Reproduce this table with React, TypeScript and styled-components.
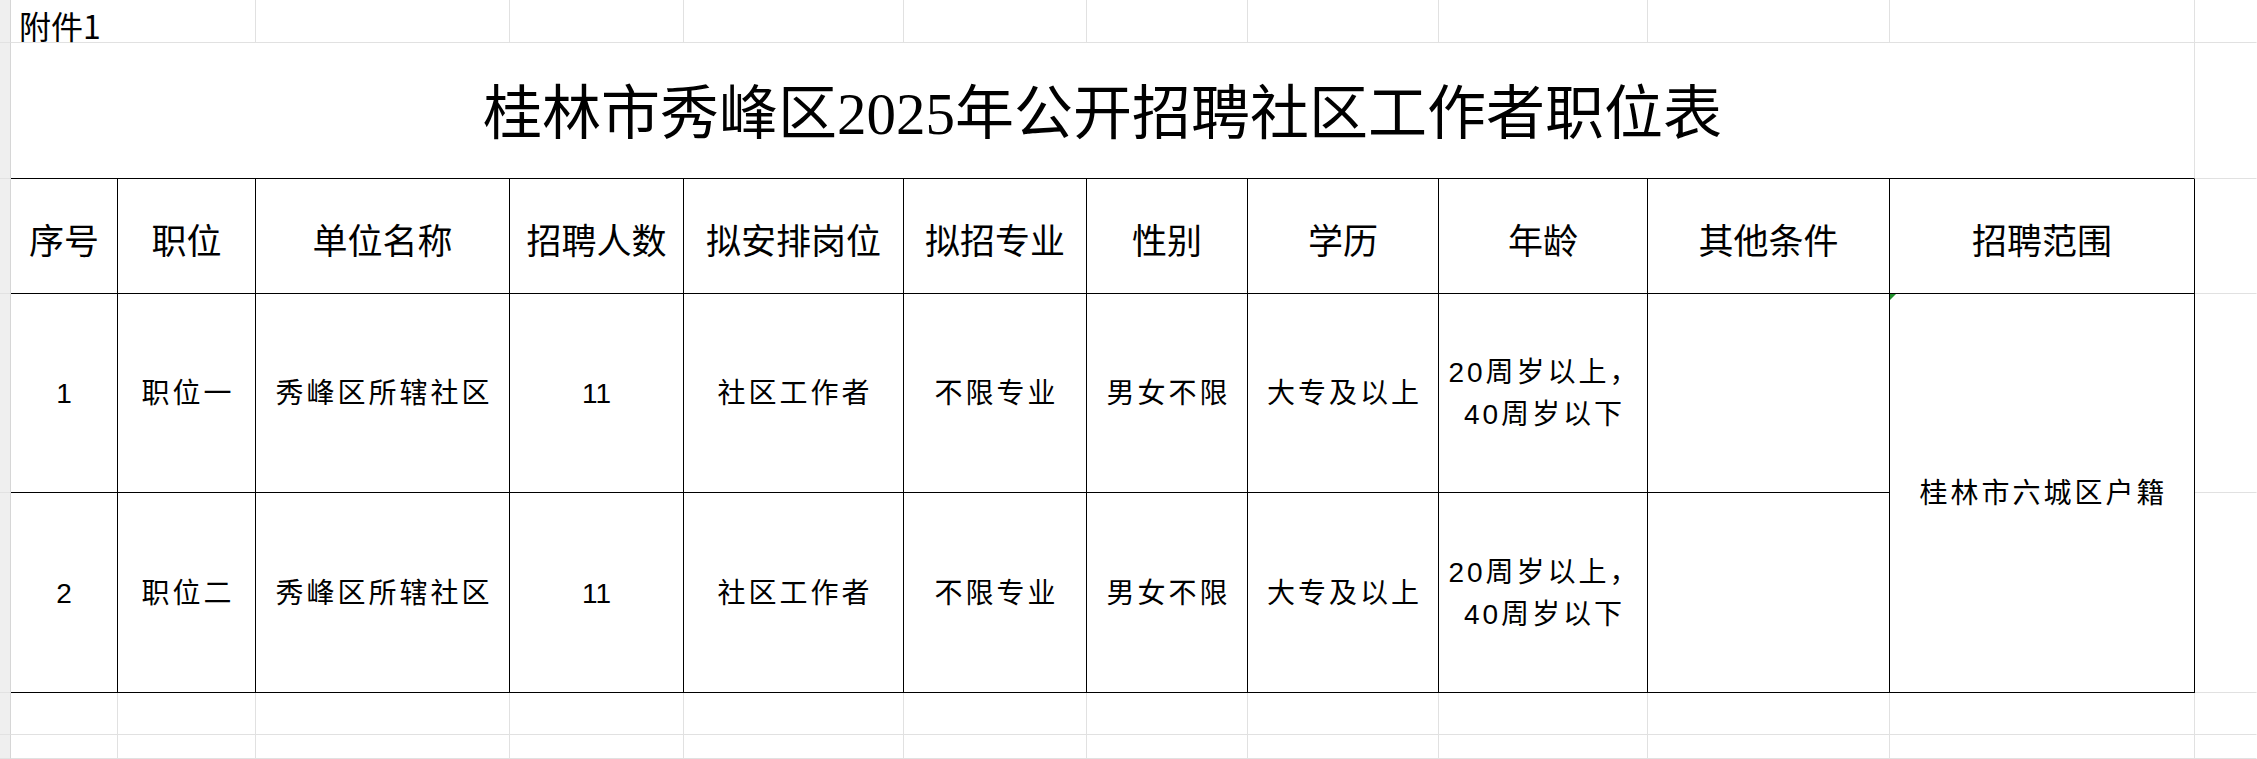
import React from 'react';
import styled, { createGlobalStyle } from 'styled-components';

const GlobalStyle = createGlobalStyle`
  html, body {
    margin: 0;
    padding: 0;
    background: #ffffff;
  }
  body {
    font-family: "Noto Sans CJK SC", "Noto Sans", sans-serif;
    color: #000;
  }
`;

// 表格列宽（含右边框），最左为行号条，最右为表外空列
const COLS = '11px 107px 138px 254px 174px 220px 183px 161px 191px 209px 242px 305px 1fr';
const ROWS = '43px 136px 115px 199px 200px 42px 1fr';

const GRID_LINE = '#e1e1e1';
const INK = '#000000';

type Edge = 'grid' | 'ink' | 'none';

const edgeColor = (e: Edge) => (e === 'ink' ? INK : e === 'grid' ? GRID_LINE : 'transparent');

const Sheet = styled.div`
  display: grid;
  grid-template-columns: ${COLS};
  grid-template-rows: ${ROWS};
  width: 100vw;
  height: 759px;
  overflow: hidden;
`;

const RowHead = styled.div`
  background: #efefef;
  border-right: 1px solid #d6d6d6;
  border-bottom: 1px solid #e2e2e2;
`;

const Cell = styled.div<{ $right?: Edge; $bottom?: Edge; $span?: number; $rows?: number }>`
  box-sizing: border-box;
  position: relative;
  display: flex;
  align-items: center;
  justify-content: center;
  text-align: center;
  min-width: 0;
  border-right: 1px solid ${({ $right = 'grid' }) => edgeColor($right)};
  border-bottom: 1px solid ${({ $bottom = 'grid' }) => edgeColor($bottom)};
  grid-column: span ${({ $span = 1 }) => $span};
  grid-row: span ${({ $rows = 1 }) => $rows};
`;

const NoteCell = styled(Cell)`
  align-items: flex-end;
  justify-content: flex-start;
  padding: 0 0 1px 8px;
`;

// 合并单元格左上角的绿色小三角（错误提示标记）
const FlagCell = styled(Cell)`
  &::before {
    content: '';
    position: absolute;
    left: 0;
    top: 0;
    border-top: 6px solid #1f8f2a;
    border-right: 6px solid transparent;
  }
`;

const NoteText = styled.span`
  font-family: "Noto Sans CJK SC", sans-serif;
  font-size: 32px;
  line-height: 1;
`;

const TitleText = styled.span`
  font-family: "Liberation Serif", "Noto Sans CJK SC", serif;
  font-size: 59px;
  line-height: 1;
  padding-top: 8px;
  white-space: nowrap;
`;

const HeadText = styled.span`
  font-family: "Noto Sans CJK SC", sans-serif;
  font-size: 35px;
  line-height: 1;
  padding-top: 4px;
  white-space: nowrap;
`;

const BodyText = styled.span`
  font-family: "Liberation Sans", "Noto Sans CJK SC", sans-serif;
  font-size: 28px;
  line-height: 42px;
  letter-spacing: 3px;
  padding-left: 3px;
  padding-top: 2px;
  white-space: nowrap;
`;

const NumText = styled.span`
  font-family: "Liberation Sans", sans-serif;
  font-size: 28px;
  line-height: 1;
  padding-top: 2px;
`;

const headers = ['序号', '职位', '单位名称', '招聘人数', '拟安排岗位', '拟招专业', '性别', '学历', '年龄', '其他条件', '招聘范围'];

type Post = {
  no: string;
  post: string;
  unit: string;
  count: string;
  job: string;
  major: string;
  sex: string;
  edu: string;
  age: string[];
  other: string;
};

const posts: Post[] = [
  { no: '1', post: '职位一', unit: '秀峰区所辖社区', count: '11', job: '社区工作者', major: '不限专业', sex: '男女不限', edu: '大专及以上', age: ['20周岁以上，', '40周岁以下'], other: '' },
  { no: '2', post: '职位二', unit: '秀峰区所辖社区', count: '11', job: '社区工作者', major: '不限专业', sex: '男女不限', edu: '大专及以上', age: ['20周岁以上，', '40周岁以下'], other: '' },
];

const BlankRow: React.FC<{ k: string }> = ({ k }) => (
  <>
    <RowHead />
    {Array.from({ length: 11 }).map((_, i) => (
      <Cell key={`${k}-${i}`} />
    ))}
    <Cell $right="none" />
  </>
);

const App: React.FC = () => {
  return (
    <>
      <GlobalStyle />
      <Sheet>
        {/* 第1行：附件1 */}
        <RowHead />
        <NoteCell $span={2}>
          <NoteText>附件1</NoteText>
        </NoteCell>
        {Array.from({ length: 9 }).map((_, i) => (
          <Cell key={`r1-${i}`} />
        ))}
        <Cell $right="none" />

        {/* 第2行：标题 */}
        <RowHead />
        <Cell $span={11} $bottom="ink">
          <TitleText>桂林市秀峰区2025年公开招聘社区工作者职位表</TitleText>
        </Cell>
        <Cell $right="none" />

        {/* 第3行：表头 */}
        <RowHead />
        {headers.map((h) => (
          <Cell key={h} $right="ink" $bottom="ink">
            <HeadText>{h}</HeadText>
          </Cell>
        ))}
        <Cell $right="none" />

        {/* 第4、5行：职位 */}
        {posts.map((p, idx) => (
          <React.Fragment key={p.no}>
            <RowHead />
            <Cell $right="ink" $bottom="ink">
              <NumText>{p.no}</NumText>
            </Cell>
            <Cell $right="ink" $bottom="ink">
              <BodyText>{p.post}</BodyText>
            </Cell>
            <Cell $right="ink" $bottom="ink">
              <BodyText>{p.unit}</BodyText>
            </Cell>
            <Cell $right="ink" $bottom="ink">
              <NumText>{p.count}</NumText>
            </Cell>
            <Cell $right="ink" $bottom="ink">
              <BodyText>{p.job}</BodyText>
            </Cell>
            <Cell $right="ink" $bottom="ink">
              <BodyText>{p.major}</BodyText>
            </Cell>
            <Cell $right="ink" $bottom="ink">
              <BodyText>{p.sex}</BodyText>
            </Cell>
            <Cell $right="ink" $bottom="ink">
              <BodyText>{p.edu}</BodyText>
            </Cell>
            <Cell $right="ink" $bottom="ink">
              <BodyText>
                {p.age[0]}
                <br />
                {p.age[1]}
              </BodyText>
            </Cell>
            <Cell $right="ink" $bottom="ink">
              <BodyText>{p.other}</BodyText>
            </Cell>
            {idx === 0 && (
              <FlagCell $right="ink" $bottom="ink" $rows={2}>
                <BodyText>桂林市六城区户籍</BodyText>
              </FlagCell>
            )}
            <Cell $right="none" />
          </React.Fragment>
        ))}

        {/* 表格下方空行 */}
        <BlankRow k="r6" />
        <BlankRow k="r7" />
      </Sheet>
    </>
  );
};

export default App;
